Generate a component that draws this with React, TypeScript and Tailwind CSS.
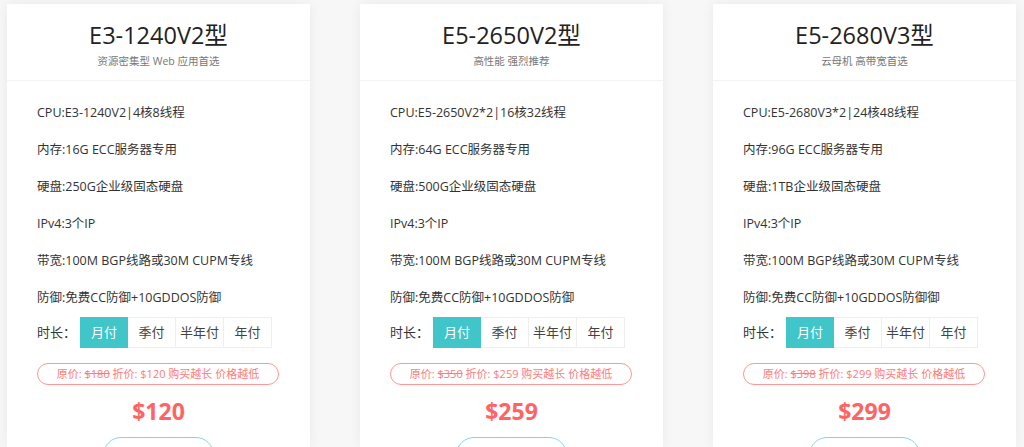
import React from "react"

const plans = [
  {
    name: "E3-1240V2型",
    tag: "资源密集型 Web 应用首选",
    specs: [
      "CPU:E3-1240V2|4核8线程",
      "内存:16G ECC服务器专用",
      "硬盘:250G企业级固态硬盘",
      "IPv4:3个IP",
      "带宽:100M BGP线路或30M CUPM专线",
      "防御:免费CC防御+10GDDOS防御",
    ],
    old: "$180",
    now: "$120",
  },
  {
    name: "E5-2650V2型",
    tag: "高性能 强烈推荐",
    specs: [
      "CPU:E5-2650V2*2|16核32线程",
      "内存:64G ECC服务器专用",
      "硬盘:500G企业级固态硬盘",
      "IPv4:3个IP",
      "带宽:100M BGP线路或30M CUPM专线",
      "防御:免费CC防御+10GDDOS防御",
    ],
    old: "$350",
    now: "$259",
  },
  {
    name: "E5-2680V3型",
    tag: "云母机 高带宽首选",
    specs: [
      "CPU:E5-2680V3*2|24核48线程",
      "内存:96G ECC服务器专用",
      "硬盘:1TB企业级固态硬盘",
      "IPv4:3个IP",
      "带宽:100M BGP线路或30M CUPM专线",
      "防御:免费CC防御+10GDDOS防御御",
    ],
    old: "$398",
    now: "$299",
  },
]

const periods = ["月付", "季付", "半年付", "年付"]

function PlanCard({ plan }: { plan: (typeof plans)[number] }) {
  return (
    <div className="w-[303px] shrink-0 bg-white shadow-[0_0_12px_rgba(0,0,0,0.06)]">
      {/* header */}
      <div className="flex flex-col items-center pt-[16px] pb-[12px] border-b border-[#f3f3f3]">
        <h2 className="text-[23.5px] leading-[30px] text-[#222]">{plan.name}</h2>
        <p className="mt-[4px] text-[10.5px] leading-[14px] text-[#777]">{plan.tag}</p>
      </div>

      <div className="px-[30px] pt-[14px]">
        {plan.specs.map((s, i) => (
          <div key={i} className="h-[37px] flex items-center text-[12.5px] text-[#333]">
            {s}
          </div>
        ))}

        {/* duration */}
        <div className="flex items-center h-[31px] text-[13px]">
          <span className="w-[43px] text-[#333]">时长：</span>
          <div className="flex">
            {periods.map((p, i) => (
              <div
                key={p}
                className={`w-[48px] h-[31px] flex items-center justify-center border ${
                  i === 0
                    ? "bg-[#40c5c8] border-[#40c5c8] text-white"
                    : "bg-white border-[#eeeeee] border-l-0 text-[#444]"
                }`}
              >
                {p}
              </div>
            ))}
          </div>
        </div>

        {/* price note */}
        <div className="mt-[15px] w-[242px] h-[22px] rounded-full border border-[#ff9797] flex items-center justify-center text-[11px] text-[#ff7b7b] whitespace-pre">
          原价: <span className="line-through">{plan.old}</span> 折价: {plan.now} 购买越长 价格越低
        </div>

        <div className="mt-[11px] text-center text-[23px] leading-[30px] font-bold text-[#ff6363]">
          {plan.now}
        </div>

        <div className="mt-[11px] flex justify-center">
          <button className="w-[111px] h-[36px] rounded-full border border-[#7fd9db] text-[#40c5c8] text-[13px]">
            立即购买
          </button>
        </div>
      </div>
    </div>
  )
}

export default function App() {
  return (
    <div
      className="w-[1024px] h-[447px] overflow-hidden bg-[#f7f7f7] pl-[7px] pt-[4px] flex gap-[50px]"
      style={{ fontFamily: '"Open Sans", "Noto Sans CJK SC", sans-serif' }}
    >
      {plans.map((p) => (
        <PlanCard key={p.name} plan={p} />
      ))}
    </div>
  )
}
